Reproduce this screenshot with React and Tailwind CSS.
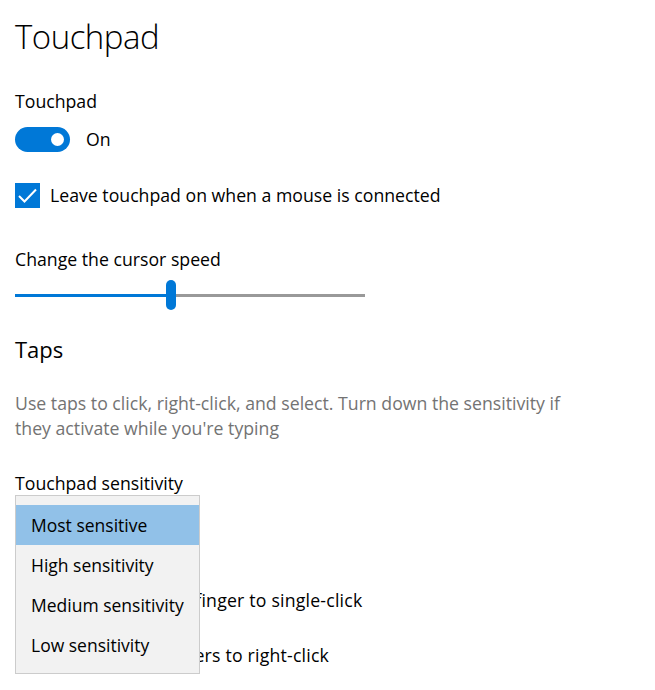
import React from 'react';

const font = { fontFamily: '"Open Sans", "Noto Sans", sans-serif' };

function Check() {
  return (
    <div className="w-[25px] h-[25px] bg-[#0078d7] flex items-center justify-center shrink-0">
      <svg width="25" height="25" viewBox="0 0 25 25">
        <path d="M4 13 L9.5 18.5 L21 6.5" fill="none" stroke="#fff" strokeWidth="2" />
      </svg>
    </div>
  );
}

export default function App() {
  const options = ['Most sensitive', 'High sensitivity', 'Medium sensitivity', 'Low sensitivity'];

  return (
    <div className="relative w-[655px] h-[690px] bg-white overflow-hidden px-[15px] text-[#000]" style={font}>
      <h1 className="pt-[17px] text-[33px] leading-[40px] font-light tracking-[-0.5px]">Touchpad</h1>

      <div className="mt-[33px] text-[17.7px] leading-[22px]">Touchpad</div>

      {/* toggle */}
      <div className="mt-[15px] flex items-center gap-4 h-[25px]">
        <div className="w-[55px] h-[25px] rounded-full bg-[#0078d7] flex items-center justify-end pr-[6px]">
          <div className="w-[13px] h-[13px] rounded-full bg-white" />
        </div>
        <span className="text-[17.7px]">On</span>
      </div>

      {/* checkbox */}
      <div className="mt-[31px] flex items-center gap-[10px] h-[25px]">
        <Check />
        <span className="text-[17.7px]">Leave touchpad on when a mouse is connected</span>
      </div>

      <div className="mt-[40px] text-[17.7px] leading-[22px]">Change the cursor speed</div>

      {/* slider */}
      <div className="mt-[10px] w-[350px] h-[30px] flex items-center">
        <div className="w-[151px] h-[3px] bg-[#0078d7]" />
        <div className="w-[10px] h-[30px] rounded-full bg-[#0078d7]" />
        <div className="flex-1 h-[3px] bg-[#999999]" />
      </div>

      <h2 className="mt-[23px] text-[22px] leading-[32px]">Taps</h2>

      <p className="mt-[26px] w-[570px] text-[17.7px] leading-[25px] text-[#737373]">
        Use taps to click, right-click, and select. Turn down the sensitivity if they activate while you're typing
      </p>

      <div className="mt-[31px] text-[17.7px] leading-[22px]">Touchpad sensitivity</div>

      <div className="mt-[10px] w-[185px] h-[32px] border-2 border-[#999] bg-white" />

      <div className="mt-[52px] flex items-center gap-[10px] h-[25px]">
        <Check />
        <span className="text-[17.7px] tracking-[0.2px]">Tap with a single finger to single-click</span>
      </div>
      <div className="mt-[30px] flex items-center gap-[10px] h-[25px]">
        <Check />
        <span className="text-[17.7px] tracking-[0.2px]">Tap with two fingers to right-click</span>
      </div>

      {/* open dropdown */}
      <div className="absolute left-[15px] top-[495px] w-[185px] h-[179px] bg-[#f2f2f2] border border-[#cccccc] py-[9px]">
        {options.map((o, i) => (
          <div
            key={o}
            className={`h-[40px] flex items-center pl-[15px] text-[17.5px] ${i === 0 ? 'bg-[#91c1e8]' : ''}`}
          >
            {o}
          </div>
        ))}
      </div>
    </div>
  );
}
